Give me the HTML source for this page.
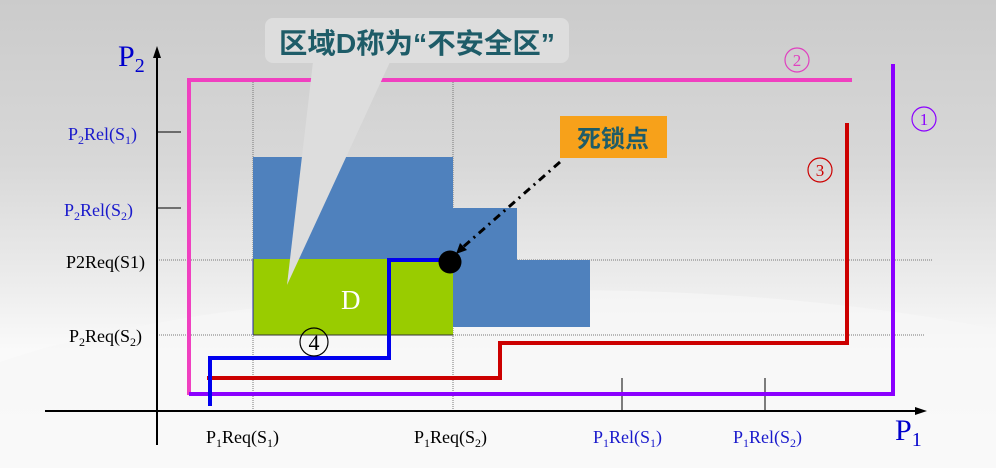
<!DOCTYPE html>
<html><head><meta charset="utf-8"><style>
html,body{margin:0;padding:0;width:996px;height:468px;overflow:hidden}
body{background:linear-gradient(to bottom,#cbcbcb 0%,#d8d8d8 35%,#ececec 60%,#fafafa 75%,#ffffff 100%);position:relative}
svg{position:absolute;left:0;top:0;display:block}
text{font-family:"Liberation Serif",serif}
.cjk{font-family:"Liberation Sans","Noto Sans CJK SC",sans-serif;font-weight:bold}
</style></head><body>
<svg width="996" height="468" viewBox="0 0 996 468">
<ellipse cx="560" cy="470" rx="700" ry="180" fill="#f6f6f6" opacity="0.7"/>
<g stroke="#777" stroke-width="1" stroke-dasharray="1,1">
<line x1="253" y1="80" x2="253" y2="411"/>
<line x1="453" y1="80" x2="453" y2="411"/>
<line x1="157" y1="260" x2="932" y2="260"/>
<line x1="157" y1="335" x2="925" y2="335"/>
</g>
<path d="M253 157 H453 V208 H517 V260 H590 V327 H453 V335 H253 Z" fill="#4f81bd"/>
<rect x="253" y="259" width="200" height="76" fill="#99cc00"/>
<line x1="253" y1="335" x2="453" y2="335" stroke="#333" stroke-width="1"/>
<line x1="253" y1="259" x2="253" y2="335" stroke="#2222aa" stroke-width="1"/>
<text x="341" y="309" font-size="27" fill="#ffffff">D</text>
<line x1="157" y1="55" x2="157" y2="445" stroke="#000" stroke-width="2"/>
<path d="M153 58 L157 46 L161 58 Z" fill="#000"/>
<line x1="45" y1="411" x2="918" y2="411" stroke="#000" stroke-width="2"/>
<path d="M915 407 L927 411 L915 415 Z" fill="#000"/>
<g stroke="#000" stroke-width="1">
<line x1="157" y1="132" x2="181" y2="132"/>
<line x1="157" y1="208" x2="181" y2="208"/>
<line x1="622" y1="378" x2="622" y2="411"/>
<line x1="765" y1="378" x2="765" y2="411"/>
</g>
<path d="M852 80 H189 V395" fill="none" stroke="#f040c0" stroke-width="4"/>
<path d="M189 394 H893 V64" fill="none" stroke="#8b00ff" stroke-width="4"/>
<path d="M207 378 H500 V343 H847 V123" fill="none" stroke="#cc0000" stroke-width="4"/>
<path d="M210 406 V358 H389 V260 H450" fill="none" stroke="#0000ee" stroke-width="4"/>
<circle cx="450" cy="262" r="11.5" fill="#000"/>
<rect x="265" y="18" width="304" height="45" rx="8" fill="#dddddd"/>
<path d="M313 62 L390 62 L287 285 Z" fill="#dddddd"/>
<text x="417" y="53" class="cjk" font-size="28" fill="#1e5c68" text-anchor="middle" textLength="276" lengthAdjust="spacingAndGlyphs">区域D称为“不安全区”</text>
<rect x="560" y="116" width="107" height="42" fill="#f7a11a"/>
<text x="613" y="147" class="cjk" font-size="24" fill="#1e5c68" text-anchor="middle">死锁点</text>
<line x1="560" y1="162" x2="462" y2="248" stroke="#000" stroke-width="3" stroke-dasharray="8,5,2,5"/>
<path d="M456 254 L460 243 L467 250 Z" fill="#000"/>
<text x="118" y="66" font-size="30" fill="#0000cc">P<tspan font-size="20" dy="6">2</tspan></text>
<text x="895" y="440" font-size="30" fill="#0000cc">P<tspan font-size="20" dy="6">1</tspan></text>
<g font-size="18">
<text x="68" y="140" fill="#1a1acc">P<tspan font-size="12" dy="4">2</tspan><tspan dy="-4">Rel(S</tspan><tspan font-size="12" dy="4">1</tspan><tspan dy="-4">)</tspan></text>
<text x="64" y="216" fill="#1a1acc">P<tspan font-size="12" dy="4">2</tspan><tspan dy="-4">Rel(S</tspan><tspan font-size="12" dy="4">2</tspan><tspan dy="-4">)</tspan></text>
<text x="66" y="268" fill="#000">P2Req(S1)</text>
<text x="69" y="342" fill="#000">P<tspan font-size="12" dy="4">2</tspan><tspan dy="-4">Req(S</tspan><tspan font-size="12" dy="4">2</tspan><tspan dy="-4">)</tspan></text>
<text x="206" y="443" fill="#000">P<tspan font-size="12" dy="4">1</tspan><tspan dy="-4">Req(S</tspan><tspan font-size="12" dy="4">1</tspan><tspan dy="-4">)</tspan></text>
<text x="414" y="443" fill="#000">P<tspan font-size="12" dy="4">1</tspan><tspan dy="-4">Req(S</tspan><tspan font-size="12" dy="4">2</tspan><tspan dy="-4">)</tspan></text>
<text x="593" y="443" fill="#1a1acc">P<tspan font-size="12" dy="4">1</tspan><tspan dy="-4">Rel(S</tspan><tspan font-size="12" dy="4">1</tspan><tspan dy="-4">)</tspan></text>
<text x="733" y="443" fill="#1a1acc">P<tspan font-size="12" dy="4">1</tspan><tspan dy="-4">Rel(S</tspan><tspan font-size="12" dy="4">2</tspan><tspan dy="-4">)</tspan></text>
</g>
<g fill="none" stroke-width="1.2">
<circle cx="797" cy="60" r="12" stroke="#e040c0"/>
<circle cx="924" cy="119" r="12" stroke="#8b00ff"/>
<circle cx="820" cy="170" r="12" stroke="#cc0000"/>
<circle cx="314" cy="342" r="14" stroke="#000"/>
</g>
<g font-size="17" text-anchor="middle">
<text x="797" y="66" fill="#e040c0">2</text>
<text x="924" y="125" fill="#8b00ff">1</text>
<text x="820" y="176" fill="#cc0000">3</text>
<text x="314" y="350" font-size="22" fill="#000">4</text>
</g>
</svg>
</body></html>
